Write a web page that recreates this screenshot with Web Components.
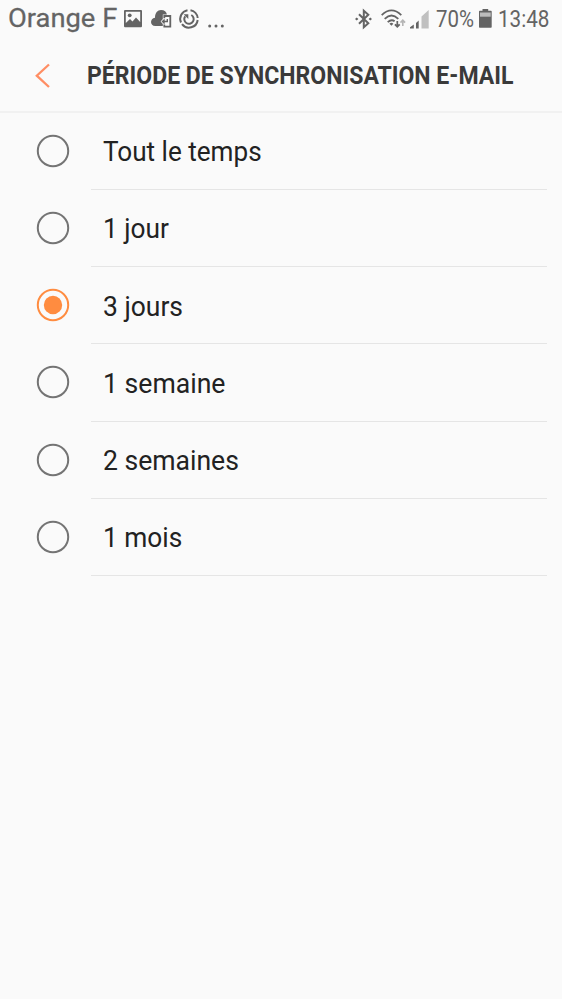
<!DOCTYPE html>
<html lang="fr">
<head>
<meta charset="utf-8">
<title>Période de synchronisation e-mail</title>
<style>
html,body{margin:0;height:100%;background:#fafafa;overflow:hidden}
</style>
</head>
<body>
<sync-screen></sync-screen>
<script>
// One line of text condensed or widened to a given advance width.
class FitText extends HTMLElement {
  connectedCallback() {
    const w = +this.getAttribute('w'), s = +this.getAttribute('size');
    this.attachShadow({mode: 'open'}).innerHTML = `<style>
      :host{display:block;flex:none}
      svg{display:block;overflow:visible}
      text{font-family:Roboto,"Noto Sans",sans-serif;fill:currentColor;stroke:currentColor;stroke-width:${this.getAttribute('bold') || 0}}
    </style>
    <svg width="${w}" height="${s * 1.3}"><text x="0" y="${s}" font-size="${s}" font-weight="${this.getAttribute('weight') || 400}"></text></svg>`;
    const t = this.shadowRoot.querySelector('text');
    t.textContent = this.getAttribute('text');
    const natural = t.getComputedTextLength();
    if (natural) t.setAttribute('transform', `scale(${w / natural} 1)`);
  }
}
customElements.define('fit-text', FitText);

const ICONS = {
  picture: [18, 18, '<path fill="currentColor" fill-rule="evenodd" d="M1 0H17Q18 0 18 1V16Q18 17.300 17 17.300H1Q0 17.300 0 16V1Q0 0 1 0ZM1.800 1.800V13L6 9L8.500 11.500L12 7.500L16.200 12V1.800Z"/><circle cx="5.700" cy="5.300" r="1.900" fill="currentColor"/>'],
  cloud: [21, 18, '<path fill="currentColor" d="M4.300 16C-1.300 16-1.300 8.500 4 7.800C4 2.800 6.500 0 10 0C13.500 0 15.600 2 15.900 4.400H11.800V9L9.600 11.500L11.800 14V16Z"/><path d="M13.300 8.300V6H19.300V16.700H13.300V14.500" fill="none" stroke="currentColor" stroke-width="1.800"/><path d="M16.300 9V11.500H12M13.600 9.400L11.500 11.500L13.600 13.600" fill="none" stroke="currentColor" stroke-width="1.400"/>'],
  sync: [20, 20, '<g fill="none" stroke="currentColor" stroke-width="2"><path d="M11.500 1.200A8.800 8.800 0 0 1 18.700 9M18.700 11A8.800 8.800 0 0 1 3 15.200M2 13.500A8.800 8.800 0 0 1 8.500 1.200"/><path d="M12.300 6A4.700 4.700 0 1 1 6.200 7.300"/></g><path fill="currentColor" d="M4.600 5.200H9.300V9.900Z"/>'],
  dots: [17, 4, '<g fill="currentColor"><circle cx="1.700" cy="2" r="1.500"/><circle cx="8" cy="2" r="1.500"/><circle cx="14.300" cy="2" r="1.500"/></g>'],
  bluetooth: [18, 20, '<path d="M4 5.300L13.300 14.300L8.800 18.300V1.700L13.300 5.700L4 14.700" fill="none" stroke="currentColor" stroke-width="2"/><g fill="currentColor"><path d="M0 10L1.700 8.400L3.400 10L1.700 11.600ZM13.600 10L15.300 8.400L17 10L15.300 11.600Z"/></g>'],
  wifi: [25, 20, '<g fill="none" stroke="currentColor" stroke-width="1.800"><path d="M.7 6.200Q10.500-3.400 20.300 6.200M3.700 9.900Q10.500 3.200 17.300 9.900M6.700 13.200Q10.500 9.800 13.600 12.300"/></g><path fill="currentColor" d="M8.400 14.700Q10.500 13 12.300 14.700L10.500 16.800Z"/><path d="M16.300 12V17M13.900 15.300L16.300 17.700L18.700 15.300" fill="none" stroke="currentColor" stroke-width="1.700"/><path d="M21.800 17V11.500M19.500 13.600L21.800 11.200L24.100 13.600" fill="none" stroke="#b5b5b5" stroke-width="1.600"/>'],
  signal: [19, 19, '<g fill="currentColor"><path d="M0 18.500V17.200L3.800 14.500V18.500ZM6 18.500V12.900L8.700 10.500V18.500Z"/><path fill="#c0c0c0" d="M11.500 18.500V6.500L18.700 0V18.500Z"/></g>'],
  battery: [13, 19, '<path fill="currentColor" d="M3.500 0H9.200V1.800H12Q12.700 1.800 12.700 2.500V18Q12.700 18.700 12 18.700H.7Q0 18.700 0 18V2.500Q0 1.800.7 1.800H3.500Z"/><path fill="#bdbdbd" d="M1 3.500H11.700V7.700H1Z"/>'],
  back: [15, 26, '<path d="M14 1.500L1.800 12.700L14 24" fill="none" stroke="#ff8e64" stroke-width="2.300"/>']
};
class UiIcon extends HTMLElement {
  connectedCallback() {
    const [w, h, body] = ICONS[this.getAttribute('name')];
    this.attachShadow({mode: 'open'}).innerHTML = `<style>:host{display:block;flex:none}svg{display:block;overflow:visible}</style><svg width="${w}" height="${h}">${body}</svg>`;
  }
}
customElements.define('ui-icon', UiIcon);

class StatusBar extends HTMLElement {
  connectedCallback() {
    this.attachShadow({mode: 'open'}).innerHTML = `<style>
      :host{display:flex;height:38px;align-items:flex-start;box-sizing:border-box;padding:0 13px 0 7.500px;color:#646464}
      .end{margin-left:auto;display:flex;align-items:flex-start}
    </style>
    <fit-text text="Orange F" w="109.300" size="26" bold=".25" style="margin-top:1.200px"></fit-text>
    <ui-icon name="picture" style="margin:10px 0 0 7.200px"></ui-icon>
    <ui-icon name="cloud" style="margin:10px 0 0 9px"></ui-icon>
    <ui-icon name="sync" style="margin:8.500px 0 0 7px"></ui-icon>
    <ui-icon name="dots" style="margin:23.500px 0 0 9px"></ui-icon>
    <div class="end">
      <ui-icon name="bluetooth" style="margin:8.500px 8px 0 0"></ui-icon>
      <ui-icon name="wifi" style="margin:9px 4px 0 0"></ui-icon>
      <ui-icon name="signal" style="margin:9.500px 7px 0 0"></ui-icon>
      <fit-text text="70%" w="38" size="23.500" style="margin:3.500px 4.500px 0 0"></fit-text>
      <ui-icon name="battery" style="margin:9px 6px 0 0"></ui-icon>
      <fit-text text="13:48" w="51.500" size="23.500" style="margin-top:3.500px"></fit-text>
    </div>`;
  }
}
customElements.define('status-bar', StatusBar);

class TitleBar extends HTMLElement {
  connectedCallback() {
    this.attachShadow({mode: 'open'}).innerHTML = `<style>
      :host{display:flex;height:75px;box-sizing:border-box;border-bottom:2px solid #f1f1f1;padding-left:35px;color:#3a3a3a}
    </style>
    <ui-icon name="back" style="margin-top:24.500px"></ui-icon>
    <fit-text text="PÉRIODE DE SYNCHRONISATION E-MAIL" w="426.500" size="26.500" weight="700" style="margin:20.300px 0 0 37px"></fit-text>`;
  }
}
customElements.define('title-bar', TitleBar);

class RadioRow extends HTMLElement {
  connectedCallback() {
    const on = this.hasAttribute('checked');
    this.attachShadow({mode: 'open'}).innerHTML = `<style>
      :host{display:flex;height:77.250px;color:#222;padding-left:36px}
      svg{flex:none;margin-top:21px}
      .cell{flex:none;box-sizing:border-box;width:456px;margin-left:21px;padding:21.500px 0 0 12px;border-bottom:1px solid #e5e5e5}
    </style>
    <svg width="34" height="34"><circle cx="17" cy="17" r="15.200" fill="none" stroke="${on ? '#ff8c40' : '#747474'}" stroke-width="2"/>${on ? '<circle cx="17" cy="17" r="9.200" fill="#ff8c40"/>' : ''}</svg>
    <div class="cell"><fit-text text="${this.getAttribute('label')}" w="${this.getAttribute('w')}" size="27"></fit-text></div>`;
  }
}
customElements.define('radio-row', RadioRow);

class SyncScreen extends HTMLElement {
  connectedCallback() {
    this.attachShadow({mode: 'open'}).innerHTML = `<style>
      :host{display:block;width:562px;height:999px;background:#fafafa}
      main{margin-top:-.5px}
    </style>
    <status-bar></status-bar>
    <title-bar></title-bar>
    <main>
      <radio-row label="Tout le temps" w="158.700"></radio-row>
      <radio-row label="1 jour" w="66"></radio-row>
      <radio-row label="3 jours" w="80" checked></radio-row>
      <radio-row label="1 semaine" w="122.500"></radio-row>
      <radio-row label="2 semaines" w="136"></radio-row>
      <radio-row label="1 mois" w="79.300"></radio-row>
    </main>`;
  }
}
customElements.define('sync-screen', SyncScreen);
</script>
</body>
</html>
